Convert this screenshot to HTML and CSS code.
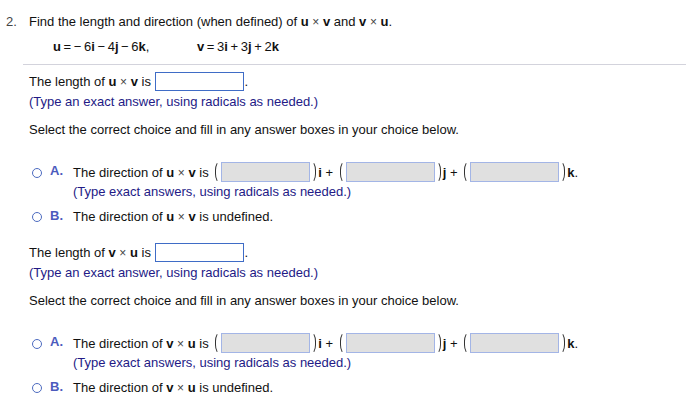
FILE: index.html
```html
<!DOCTYPE html>
<html lang="en">
<head>
    <meta charset="UTF-8">
    <title>Cross Product</title>
    <link rel="stylesheet" href="styles.css">
</head>
<body>
    <div class="question">
        <div class="header">
            <span class="num">2.</span>
            <span>Find the length and direction (when defined) of <b>u</b> <span class="x">×</span> <b>v</b> and <b>v</b> <span class="x">×</span> <b>u</b>.</span>
        </div>
        <div class="vectors">
            <span class="vec-u"><b>u</b> = − 6<b>i</b> − 4<b>j</b> − 6<b>k</b>,</span>
            <span><b>v</b> = 3<b>i</b> + 3<b>j</b> + 2<b>k</b></span>
        </div>
    </div>
    <hr class="rule">

    <!-- u x v -->
    <div class="part">
        <div class="line">The length of <b>u</b> <span class="x">×</span> <b>v</b> is <span class="answer"></span>.</div>
        <div class="hint">(Type an exact answer, using radicals as needed.)</div>
        <div class="line select">Select the correct choice and fill in any answer boxes in your choice below.</div>
        <div class="choice first">
            <span class="radio"></span><span class="letter">A.</span>
            <div class="choice-body">
                <div class="dir-row">The direction of <b>u</b> <span class="x">×</span> <b>v</b> is <span class="paren left"></span><span class="field"></span><span class="paren right"></span><b>i</b> + <span class="paren left"></span><span class="field"></span><span class="paren right"></span><b>j</b> + <span class="paren left"></span><span class="field"></span><span class="paren right"></span><b>k</b>.</div>
                <div class="hint small">(Type exact answers, using radicals as needed.)</div>
            </div>
        </div>
        <div class="choice second">
            <span class="radio"></span><span class="letter">B.</span>
            <div class="choice-body">The direction of <b>u</b> <span class="x">×</span> <b>v</b> is undefined.</div>
        </div>
    </div>

    <!-- v x u -->
    <div class="part next">
        <div class="line">The length of <b>v</b> <span class="x">×</span> <b>u</b> is <span class="answer"></span>.</div>
        <div class="hint">(Type an exact answer, using radicals as needed.)</div>
        <div class="line select">Select the correct choice and fill in any answer boxes in your choice below.</div>
        <div class="choice first">
            <span class="radio"></span><span class="letter">A.</span>
            <div class="choice-body">
                <div class="dir-row">The direction of <b>v</b> <span class="x">×</span> <b>u</b> is <span class="paren left"></span><span class="field"></span><span class="paren right"></span><b>i</b> + <span class="paren left"></span><span class="field"></span><span class="paren right"></span><b>j</b> + <span class="paren left"></span><span class="field"></span><span class="paren right"></span><b>k</b>.</div>
                <div class="hint small">(Type exact answers, using radicals as needed.)</div>
            </div>
        </div>
        <div class="choice second">
            <span class="radio"></span><span class="letter">B.</span>
            <div class="choice-body">The direction of <b>v</b> <span class="x">×</span> <b>u</b> is undefined.</div>
        </div>
    </div>
</body>
</html>
```

FILE: styles.css
```css
body {
    margin: 0;
    font-family: 'Liberation Sans', Arial, sans-serif;
    font-size: 13px;
    color: #111;
    background: white;
}
b {
    font-weight: bold;
}
.x {
    color: #444;
    font-size: 12px;
}
.question {
    padding-top: 12px;
}
.header {
    display: flex;
    line-height: 20px;
}
.num {
    width: 29px;
    flex-shrink: 0;
    padding-left: 6px;
    box-sizing: border-box;
    color: #444;
}
.vectors {
    display: flex;
    margin-top: 5px;
    padding-left: 53px;
    line-height: 20px;
    word-spacing: -1px;
}
.vec-u {
    width: 144px;
}
.rule {
    margin: 7px 0 0 23px;
    border: none;
    border-top: 1px solid #d3d3dc;
    height: 0;
}
.part {
    padding-left: 29px;
    margin-top: 7px;
}
.part.next {
    margin-top: 16px;
}
.line {
    line-height: 20px;
    height: 20px;
    white-space: nowrap;
}
.line.select {
    margin-top: 8px;
}
.answer {
    display: inline-block;
    vertical-align: middle;
    width: 87px;
    height: 17px;
    border: 1px solid #3f6cc6;
    margin: -2px 1px 0 0;
}
.hint {
    color: #231a86;
    line-height: 20px;
}
.hint.small {
    line-height: 16px;
    margin-top: 1px;
}
.choice {
    display: flex;
    align-items: flex-start;
    padding-left: 3px;
}
.choice.first {
    margin-top: 23px;
}
.choice.second {
    margin-top: 7px;
    line-height: 20px;
}
.radio {
    width: 8px;
    height: 8px;
    border: 1.5px solid #4d6bc0;
    border-radius: 50%;
    margin-top: 4.5px;
    flex-shrink: 0;
}
.letter {
    width: 31px;
    flex-shrink: 0;
    padding-left: 8px;
    box-sizing: border-box;
    color: #4c5bbd;
    font-weight: bold;
    line-height: 18px;
}
.choice.first .letter {
    line-height: 16px;
}
.dir-row {
    height: 20px;
    line-height: 20px;
    white-space: nowrap;
}
.field {
    display: inline-block;
    vertical-align: middle;
    width: 87px;
    height: 18px;
    background: #e0e0e0;
    border: 1px solid #a3b5e6;
    margin-top: -3px;
}
.paren {
    display: inline-block;
    vertical-align: middle;
    width: 5px;
    height: 22px;
    border: 1.5px solid #333;
    box-sizing: border-box;
    margin-top: -3px;
}
.paren.left {
    border-right: none;
    border-top-color: transparent;
    border-bottom-color: transparent;
    border-radius: 6px 0 0 6px / 11px 0 0 11px;
    margin-left: 3px;
    margin-right: 1px;
}
.paren.right {
    border-left: none;
    border-top-color: transparent;
    border-bottom-color: transparent;
    border-radius: 0 6px 6px 0 / 0 11px 11px 0;
    margin-left: 1px;
    margin-right: 2px;
}
```
